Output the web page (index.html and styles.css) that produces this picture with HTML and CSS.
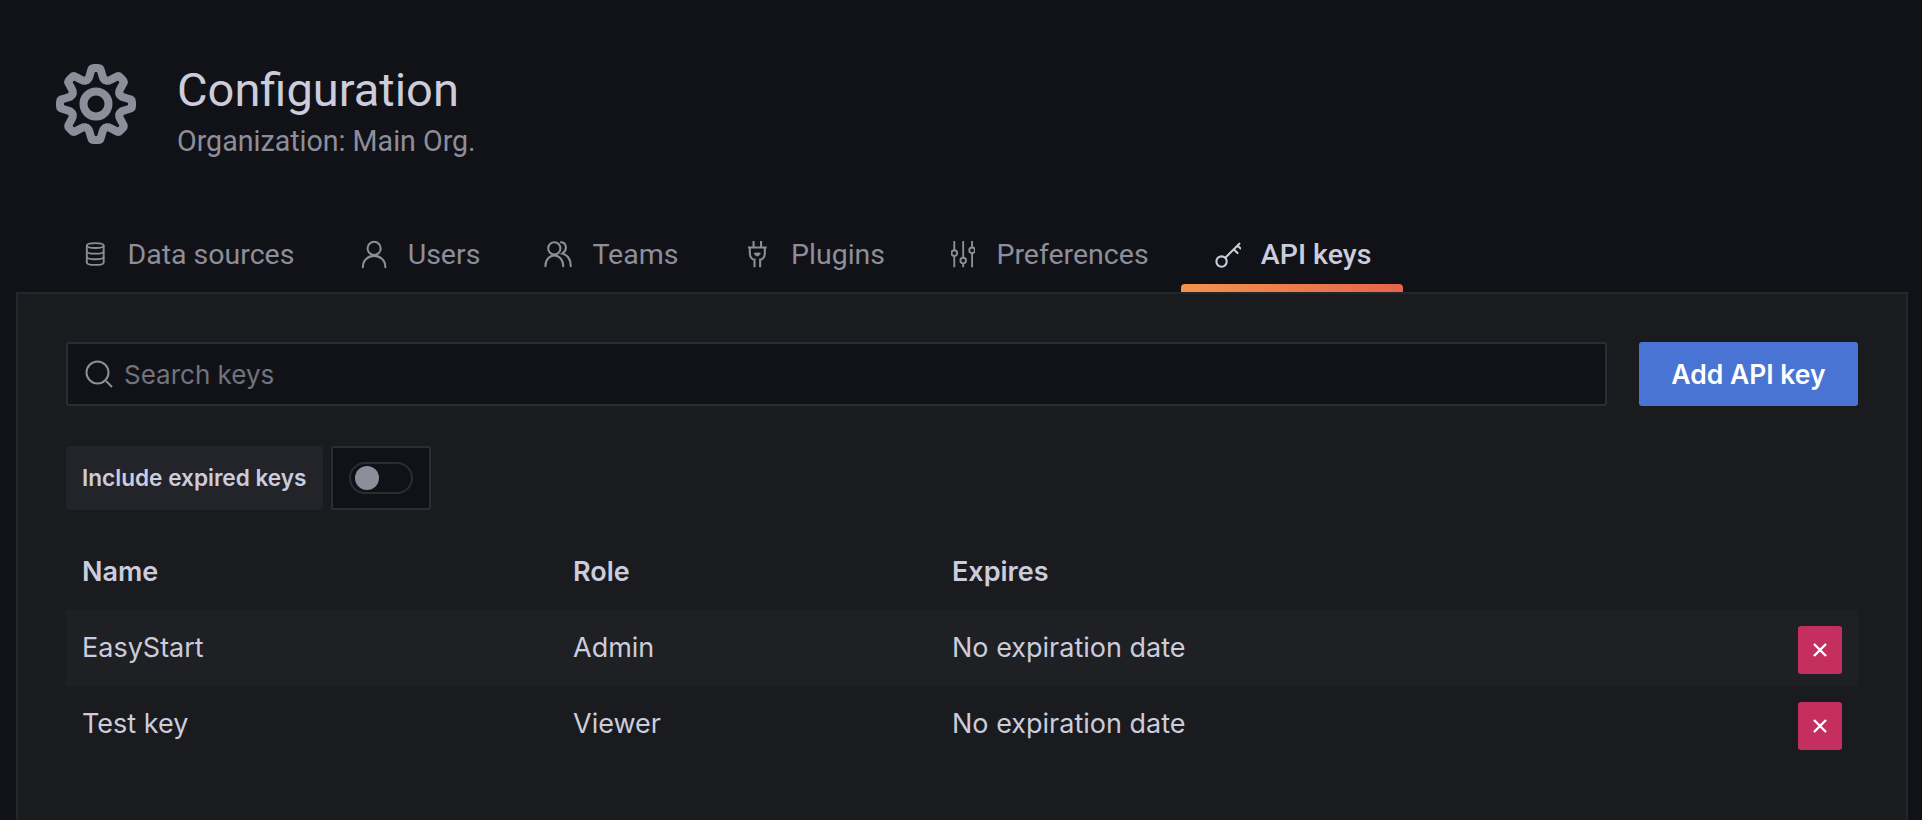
FILE: index.html
```html
<!DOCTYPE html>
<html lang="en">
<head>
    <meta charset="UTF-8">
    <title>Configuration: API keys</title>
    <link rel="stylesheet" href="styles.css">
</head>
<body>

<div class="page-header">
    <svg class="header-icon" viewBox="-40 -40 80 80" fill="none" stroke="#8e8e9b" stroke-width="8" stroke-linecap="round" stroke-linejoin="round">
        <g id="teeth">
            <path d="M-9.8 -23.6Q-7.5 -24.6 -6.8 -27L-5 -33Q-4.5 -36 -2 -36L2 -36Q4.5 -36 5 -33L6.8 -27Q7.5 -24.6 9.8 -23.6"/>
            <path transform="rotate(45)" d="M-9.8 -23.6Q-7.5 -24.6 -6.8 -27L-5 -33Q-4.5 -36 -2 -36L2 -36Q4.5 -36 5 -33L6.8 -27Q7.5 -24.6 9.8 -23.6"/>
            <path transform="rotate(90)" d="M-9.8 -23.6Q-7.5 -24.6 -6.8 -27L-5 -33Q-4.5 -36 -2 -36L2 -36Q4.5 -36 5 -33L6.8 -27Q7.5 -24.6 9.8 -23.6"/>
            <path transform="rotate(135)" d="M-9.8 -23.6Q-7.5 -24.6 -6.8 -27L-5 -33Q-4.5 -36 -2 -36L2 -36Q4.5 -36 5 -33L6.8 -27Q7.5 -24.6 9.8 -23.6"/>
            <path transform="rotate(180)" d="M-9.8 -23.6Q-7.5 -24.6 -6.8 -27L-5 -33Q-4.5 -36 -2 -36L2 -36Q4.5 -36 5 -33L6.8 -27Q7.5 -24.6 9.8 -23.6"/>
            <path transform="rotate(225)" d="M-9.8 -23.6Q-7.5 -24.6 -6.8 -27L-5 -33Q-4.5 -36 -2 -36L2 -36Q4.5 -36 5 -33L6.8 -27Q7.5 -24.6 9.8 -23.6"/>
            <path transform="rotate(270)" d="M-9.8 -23.6Q-7.5 -24.6 -6.8 -27L-5 -33Q-4.5 -36 -2 -36L2 -36Q4.5 -36 5 -33L6.8 -27Q7.5 -24.6 9.8 -23.6"/>
            <path transform="rotate(315)" d="M-9.8 -23.6Q-7.5 -24.6 -6.8 -27L-5 -33Q-4.5 -36 -2 -36L2 -36Q4.5 -36 5 -33L6.8 -27Q7.5 -24.6 9.8 -23.6"/>
        </g>
        <circle r="12.5" stroke-width="8"/>
    </svg>
    <div class="header-text">
        <h1>Configuration</h1>
        <div class="subtitle">Organization: Main Org.</div>
    </div>
</div>

<div class="tabs">
    <a class="tab tab-sources">
        <svg class="tab-icon" viewBox="0 0 24 32" fill="none" stroke="#8e8e9b" stroke-width="2">
            <path d="M3 7C3 3.5 21 3.5 21 7V25C21 28.5 3 28.5 3 25Z"/>
            <path d="M3 7C3 10.5 21 10.5 21 7M3 13C3 16.500 21 16.500 21 13M3 19C3 22.500 21 22.500 21 19"/>
            <path d="M6.500 15.500v.1M6.500 21.500v.1"/>
        </svg>
        Data sources
    </a>
    <a class="tab tab-users">
        <svg class="tab-icon" viewBox="0 0 28 32" fill="none" stroke="#8e8e9b" stroke-width="2.200" stroke-linecap="round">
            <circle cx="14" cy="10" r="7"/>
            <path d="M2 30C2 22 8 18 14 18S26 22 26 30"/>
        </svg>
        Users
    </a>
    <a class="tab tab-teams">
        <svg class="tab-icon" viewBox="0 0 30 32" fill="none" stroke="#8e8e9b" stroke-width="2.200" stroke-linecap="round">
            <circle cx="11" cy="10" r="6.500"/>
            <path d="M1.500 29C1.500 22 6 17.500 11 17.500S20.500 22 20.500 29"/>
            <path d="M18 3.500C24 3.500 25.500 12 19.500 15.500C25 17 28.500 22 28.500 29"/>
        </svg>
        Teams
    </a>
    <a class="tab tab-plugins">
        <svg class="tab-icon" viewBox="0 0 22 32" fill="none" stroke="#8e8e9b" stroke-width="2.200">
            <path d="M7 2V9M15 2V9M1 9H21M3 9V15C3 20 6 22 8 22V30M19 9V15C19 20 16 22 14 22V30"/>
            <path d="M8 15H14C14 19 8 19 8 15Z" fill="#8e8e9b" stroke-width="1"/>
        </svg>
        Plugins
    </a>
    <a class="tab tab-prefs">
        <svg class="tab-icon" viewBox="0 0 26 32" fill="none" stroke="#8e8e9b" stroke-width="2">
            <path d="M3.500 2V12M3.500 18V30M13 2V20M13 26V30M22.500 2V9M22.500 15V30"/>
            <circle cx="3.500" cy="15" r="3"/>
            <circle cx="13" cy="23" r="3"/>
            <circle cx="22.500" cy="12" r="3"/>
        </svg>
        Preferences
    </a>
    <a class="tab tab-keys active">
        <svg class="tab-icon" viewBox="0 0 28 32" fill="none" stroke="#ccccdc" stroke-width="2.200" stroke-linecap="round">
            <circle cx="7" cy="24" r="5.500"/>
            <path d="M11 20L26 5M20 11L24 15M24 7L27 10"/>
        </svg>
        API keys
    </a>
</div>

<div class="panel">
    <div class="toolbar">
        <div class="search">
            <svg class="search-icon" viewBox="0 0 28 28" fill="none" stroke="#8e8e9b" stroke-width="2">
                <circle cx="12.500" cy="12.500" r="11"/>
                <path d="M21 21L27 27"/>
            </svg>
            <span>Search keys</span>
        </div>
        <a class="btn-primary">Add API key</a>
    </div>

    <div class="filter">
        <label class="filter-label">Include expired keys</label>
        <div class="switch-box">
            <div class="switch"><div class="knob"></div></div>
        </div>
    </div>

    <div class="row row-head">
        <div>Name</div>
        <div>Role</div>
        <div>Expires</div>
    </div>
    <div class="row row-odd">
        <div>EasyStart</div>
        <div>Admin</div>
        <div>No expiration date</div>
        <a class="btn-delete">
            <svg viewBox="0 0 14 14" stroke="#fff" stroke-width="2.400"><path d="M1 1L13 13M13 1L1 13"/></svg>
        </a>
    </div>
    <div class="row">
        <div>Test key</div>
        <div>Viewer</div>
        <div>No expiration date</div>
        <a class="btn-delete">
            <svg viewBox="0 0 14 14" stroke="#fff" stroke-width="2.400"><path d="M1 1L13 13M13 1L1 13"/></svg>
        </a>
    </div>
</div>

</body>
</html>
```
FILE: styles.css
```css
html, body {
    height: 100%;
}
body {
    margin: 0;
    background-color: #111217;
    color: #ccccdc;
    font-family: Inter, "Liberation Sans", sans-serif;
    display: flex;
    flex-direction: column;
    overflow: hidden;
}
.page-header {
    display: flex;
    align-items: flex-start;
    padding: 64px 0 0 56px;
    height: 180px;
    box-sizing: border-box;
}
.header-icon {
    width: 80px;
    height: 80px;
    margin-right: 41px;
}
.header-text {
    margin-top: 1px;
}
h1 {
    margin: 0;
    font-family: Roboto, sans-serif;
    font-size: 47px;
    font-weight: 400;
    line-height: 50px;
}
.subtitle {
    font-family: Roboto, sans-serif;
    font-size: 28.6px;
    line-height: 36px;
    color: #8e8e9b;
    margin-top: 8px;
}
.tabs {
    display: flex;
    height: 112px;
    box-sizing: border-box;
    align-items: stretch;
}
.tab {
    display: flex;
    align-items: center;
    gap: 20px;
    box-sizing: border-box;
    height: 112px;
    padding-top: 36px;
    font-family: Roboto, sans-serif;
    font-size: 28.5px;
    color: #8e8e9b;
    position: relative;
}
.tab-icon {
    height: 30px;
    width: auto;
}
.tab-sources { margin-left: 84px; gap: 21px; }
.tab-users { margin-left: 67px; }
.tab-teams { margin-left: 64px; }
.tab-plugins { margin-left: 69px; gap: 23px; }
.tab-prefs { margin-left: 66px; gap: 21px; }
.tab-keys { margin-left: 66px; }
.tab.active {
    color: #ccccdc;
    font-weight: 500;
}
.tab.active::after {
    content: "";
    position: absolute;
    left: -34px;
    right: -32px;
    bottom: 0;
    height: 8px;
    border-radius: 4px 4px 0 0;
    background-image: linear-gradient(90deg, #f2944b, #e5654b);
}
.panel {
    flex: 1;
    margin: 0 14px 0 16px;
    padding: 48px 48px 0 48px;
    border: 2px solid #25262b;
    border-bottom: none;
    background-color: #1a1b1f;
}
.toolbar {
    display: flex;
    gap: 32px;
    height: 64px;
}
.search {
    flex: 1;
    display: flex;
    align-items: center;
    gap: 11px;
    padding-left: 17px;
    border: 2px solid #2c2d33;
    border-radius: 3px;
    background-color: #111217;
    color: #73737f;
    font-size: 26px;
}
.search-icon {
    width: 28px;
    height: 28px;
}
.btn-primary {
    display: flex;
    align-items: center;
    justify-content: center;
    width: 219px;
    border-radius: 3px;
    background-color: #4a74d4;
    color: #fff;
    font-size: 26.5px;
    font-weight: 600;
}
.filter {
    display: flex;
    gap: 8px;
    height: 64px;
    margin-top: 40px;
}
.filter-label {
    display: flex;
    align-items: center;
    padding: 0 16px 2px;
    border-radius: 4px;
    background-color: #22242a;
    font-size: 22.6px;
    font-weight: 600;
}
.switch-box {
    display: flex;
    align-items: center;
    justify-content: center;
    width: 100px;
    box-sizing: border-box;
    border: 2px solid #2c2d33;
    border-radius: 2px;
    background-color: #111217;
}
.switch {
    display: flex;
    align-items: center;
    width: 64px;
    height: 32px;
    box-sizing: border-box;
    padding-left: 4px;
    border: 2px solid #2c2d33;
    border-radius: 16px;
}
.knob {
    width: 24px;
    height: 24px;
    border-radius: 50%;
    background-color: #8e8e9b;
}
.row {
    display: grid;
    grid-template-columns: 491px 379px 1fr 44px;
    align-items: center;
    box-sizing: border-box;
    height: 76px;
    padding: 0 16px 2px;
    font-size: 27px;
}
.row-head {
    margin-top: 24px;
    font-weight: 600;
}
.row-odd {
    background-color: #1e2024;
}
.btn-delete {
    display: flex;
    align-items: center;
    justify-content: center;
    height: 48px;
    margin-top: 6px;
    border-radius: 3px;
    background-color: #c42f60;
}
.btn-delete svg {
    width: 14px;
    height: 14px;
}
```
